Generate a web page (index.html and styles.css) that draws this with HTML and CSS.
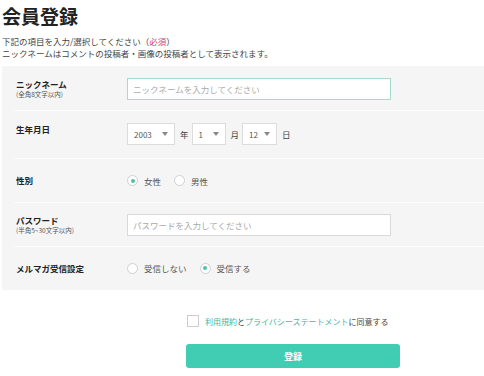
FILE: index.html
```html
<!DOCTYPE html>
<html lang="ja">
<head>
    <meta charset="UTF-8">
    <meta name="viewport" content="width=device-width, initial-scale=1.0">
    <title>会員登録</title>
    <link rel="stylesheet" href="styles.css">
</head>
<body>

    <div class="page">
        <h1>会員登録</h1>
        <p class="lead">
            下記の項目を入力/選択してください（<span class="req">必須</span>）<br>
            ニックネームはコメントの投稿者・画像の投稿者として表示されます。
        </p>

        <form class="form-box">
            <div class="row row-nick">
                <div class="label">
                    ニックネーム
                    <span class="sub">(全角8文字以内)</span>
                </div>
                <div class="field">
                    <input type="text" class="text-input focused" placeholder="ニックネームを入力してください">
                </div>
            </div>

            <div class="row row-birth">
                <div class="label">生年月日</div>
                <div class="field">
                    <div class="select year">2003<span class="arrow"></span></div>
                    <span class="unit">年</span>
                    <div class="select month">1<span class="arrow"></span></div>
                    <span class="unit">月</span>
                    <div class="select day">12<span class="arrow"></span></div>
                    <span class="unit">日</span>
                </div>
            </div>

            <div class="row row-gender">
                <div class="label">性別</div>
                <div class="field">
                    <label class="radio checked"><span class="dot"></span>女性</label>
                    <label class="radio"><span class="dot"></span>男性</label>
                </div>
            </div>

            <div class="row row-pass">
                <div class="label">
                    パスワード
                    <span class="sub">(半角5~30文字以内)</span>
                </div>
                <div class="field">
                    <input type="password" class="text-input" placeholder="パスワードを入力してください">
                </div>
            </div>

            <div class="row row-mail">
                <div class="label">メルマガ受信設定</div>
                <div class="field">
                    <label class="radio"><span class="dot"></span>受信しない</label>
                    <label class="radio checked"><span class="dot"></span>受信する</label>
                </div>
            </div>
        </form>

        <div class="footer">
            <label class="agree">
                <span class="check"></span>
                <span><a href="#">利用規約</a>と<a href="#">プライバシーステートメント</a>に同意する</span>
            </label>
            <button type="button" class="submit">登録</button>
        </div>
    </div>

</body>
</html>
```

FILE: styles.css
```css
body {
    margin: 0;
    background: #fff;
    font-family: "Noto Sans CJK JP", "Noto Sans", sans-serif;
    color: #333;
}

.page {
    padding-left: 2px;
}

h1 {
    margin: 4px 0 0;
    font-size: 19px;
    line-height: 24px;
    font-weight: bold;
    color: #222;
}

.lead {
    margin: 8px 0 0;
    font-size: 8.5px;
    line-height: 11.5px;
    color: #444;
}

.req {
    color: #d2456f;
}

.form-box {
    margin-top: 7px;
    background: #f5f5f5;
    padding-left: 12px;
}

.row {
    display: flex;
    align-items: center;
    border-bottom: 1px solid #fcfcfc;
    box-sizing: border-box;
}

.row:last-child {
    border-bottom: none;
}

.row-nick { height: 45px; padding-top: 1px; }
.row-birth { height: 48px; align-items: flex-start; padding-top: 12px; }
.row-gender { height: 44px; }
.row-pass { height: 44px; }
.row-mail { height: 43px; padding-bottom: 1px; }

.label {
    width: 111px;
    padding-left: 2px;
    font-size: 8.5px;
    line-height: 11px;
    font-weight: bold;
    color: #222;
}

.row-birth .label {
    padding-top: 1px;
}

.sub {
    display: block;
    font-size: 6.5px;
    line-height: 8px;
    font-weight: normal;
    color: #555;
}

.field {
    display: flex;
    align-items: center;
}

.text-input {
    width: 264px;
    height: 22px;
    box-sizing: border-box;
    padding: 0 5px;
    border: 1px solid #d9d9d9;
    background: #fff;
    font-family: inherit;
    font-size: 8.5px;
    outline: none;
}

.text-input.focused {
    border-color: #a6dccf;
}

.text-input::placeholder {
    color: #aaa;
}

.select {
    height: 22px;
    box-sizing: border-box;
    border: 1px solid #dcdcdc;
    background: #fff;
    display: flex;
    align-items: center;
    justify-content: space-between;
    padding: 0 6px 0 6px;
    font-size: 8px;
    color: #555;
}

.year { width: 48px; }
.month { width: 34px; }
.day { width: 35px; }

.arrow {
    width: 0;
    height: 0;
    border-left: 3px solid transparent;
    border-right: 3px solid transparent;
    border-top: 4px solid #888;
}

.unit {
    font-size: 8.5px;
    color: #444;
    margin: 0 3px 0 5px;
}

.radio {
    display: flex;
    align-items: center;
    font-size: 8.5px;
    color: #555;
    margin-right: 13px;
}

.dot {
    width: 11px;
    height: 11px;
    box-sizing: border-box;
    border: 1px solid #d0d0d0;
    border-radius: 50%;
    background: #fff;
    margin-right: 6px;
    position: relative;
}

.radio.checked .dot::after {
    content: "";
    position: absolute;
    left: 2.5px;
    top: 2.5px;
    width: 4px;
    height: 4px;
    border-radius: 50%;
    background: #4cc3a6;
}

.footer {
    padding: 25px 0 8px 184px;
}

.agree {
    display: flex;
    align-items: center;
    font-size: 8px;
    color: #444;
    padding-left: 1px;
}

.check {
    width: 12px;
    height: 12px;
    box-sizing: border-box;
    border: 1px solid #ccc;
    background: #fff;
    margin-right: 6px;
}

.agree a {
    color: #43b89d;
    text-decoration: none;
}

.submit {
    display: block;
    margin-top: 17px;
    width: 214px;
    height: 24px;
    border: none;
    border-radius: 3px;
    background: #40cdb3;
    color: #fff;
    font-family: inherit;
    font-size: 9px;
    font-weight: bold;
}
```
